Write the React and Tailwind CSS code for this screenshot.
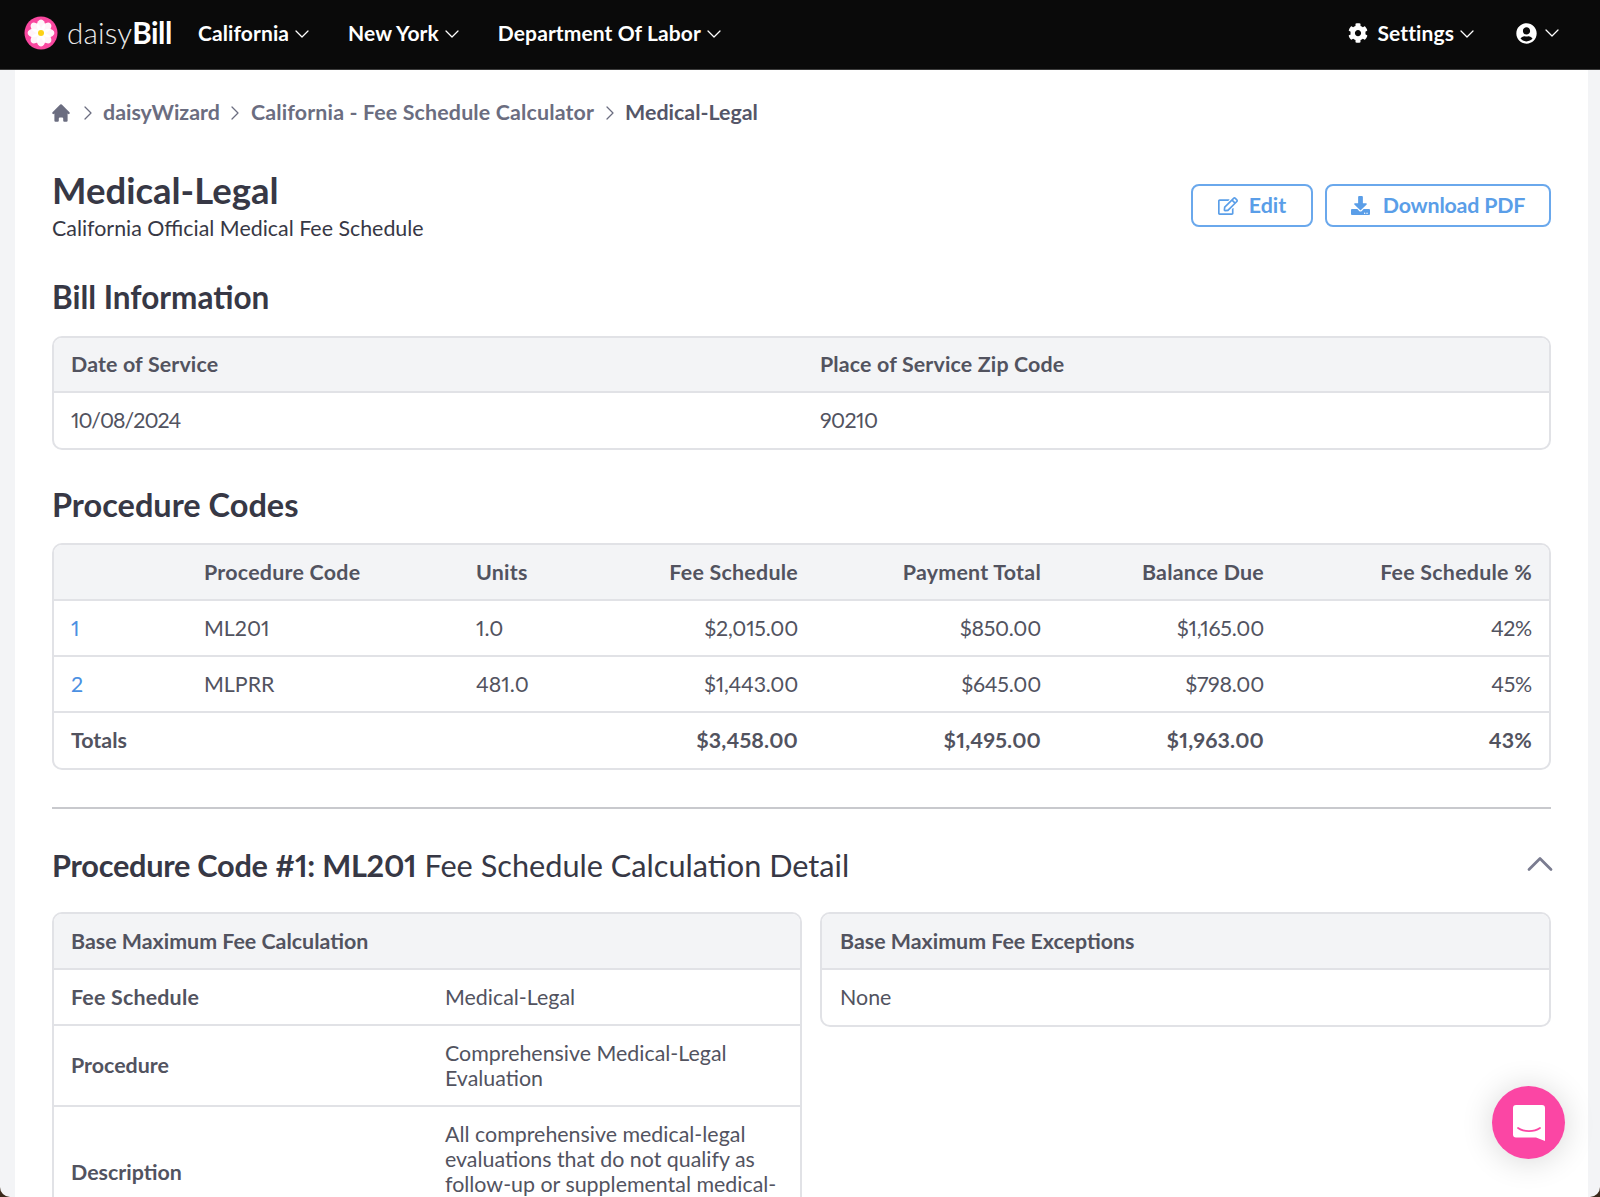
import React from "react";
import { ChevronDown, ChevronRight, ChevronUp } from "lucide-react";
import { FaCog, FaUserCircle, FaRegEdit, FaDownload } from "react-icons/fa";
import { HiHome } from "react-icons/hi";

const Logo = () => (
  <div className="flex items-center gap-[9px]">
    <svg width="34" height="34" viewBox="0 0 34 34">
      <circle cx="17" cy="17" r="16.5" fill="#f9479f" />
      {[0, 45, 90, 135, 180, 225, 270, 315].map((a) => (
        <ellipse key={a} cx="17" cy="9.6" rx="4.2" ry="6" fill="#fff" fillOpacity="0.94" transform={`rotate(${a} 17 17)`} />
      ))}
      <circle cx="17" cy="17" r="3" fill="#fcd116" />
    </svg>
    <span className="text-[29.6px] font-light tracking-[0.15px] text-[#e9e9e9]">
      daisy<span className="font-bold tracking-[-0.4px] text-white">Bill</span>
    </span>
  </div>
);

const NavItem = ({ children }) => (
  <div className="flex items-center gap-px text-[21px] font-bold tracking-[0.1px] text-white">
    {children}
    <ChevronDown size={24} strokeWidth={1.25} className="mt-[2px]" />
  </div>
);

const Crumb = () => <ChevronRight size={24} strokeWidth={1.25} />;

const Card = ({ children }) => (
  <div className="overflow-hidden rounded-[10px] border-2 border-[#e1e2e6]">{children}</div>
);

const rows = [
  ["1", "ML201", "1.0", "$2,015.00", "$850.00", "$1,165.00", "42%"],
  ["2", "MLPRR", "481.0", "$1,443.00", "$645.00", "$798.00", "45%"],
];

const codeCols = "grid grid-cols-[133px_272px_120px_202px_243px_223px_1fr] items-center px-[17px]";
const money = "text-right tracking-[-0.25px]";
const total = "text-right tracking-[0.15px]";

export default function App() {
  return (
    <div className="h-[1197px] w-[1600px] overflow-hidden bg-[#3b2a1c] font-['Lato',sans-serif] text-[21.4px] text-[#52535f] proportional-nums">
      <div className="flex h-full flex-col overflow-hidden rounded-b-[10px] bg-[#f3f4f6]">
        <nav className="flex h-[70px] shrink-0 items-center justify-between border-b border-[#3c3c3c] bg-[#0a0a0a] pb-[3px] pl-6 pr-[36px]">
          <div className="flex items-center">
            <Logo />
            <div className="ml-[26px] flex items-center gap-[34px]">
              <NavItem>California</NavItem>
              <NavItem>New York</NavItem>
              <NavItem>Department Of Labor</NavItem>
            </div>
          </div>
          <div className="flex items-center gap-[37px]">
            <NavItem>
              <FaCog size={20} className="mr-[8px]" />
              Settings
            </NavItem>
            <div className="flex items-center gap-[3px] text-white">
              <FaUserCircle size={21} />
              <ChevronDown size={24} strokeWidth={1.25} />
            </div>
          </div>
        </nav>

        <main className="ml-[15px] mr-[12px] min-h-0 flex-1 overflow-hidden bg-white px-[37px]">
          <div className="flex h-[84px] items-center gap-[3.5px] pt-[1px] font-bold text-[#6b6d80]">
            <HiHome size={22} className="-ml-[2px]" />
            <Crumb />
            <span>daisyWizard</span>
            <Crumb />
            <span className="tracking-[0.15px]">California - Fee Schedule Calculator</span>
            <Crumb />
            <span className="text-[#555668]">Medical-Legal</span>
          </div>

          <div className="flex items-start justify-between">
            <div>
              <h1 className="mt-[14px] text-[36.5px] font-bold leading-[44px] text-[#373845]">Medical-Legal</h1>
              <p className="mt-[4px] leading-[25px] text-[#373845]">California Official Medical Fee Schedule</p>
            </div>
            <div className="mt-[30px] flex gap-3 font-bold text-[#5a9ee8]">
              <button className="flex h-[43px] w-[122px] items-center justify-center gap-[11px] rounded-[8px] border-2 border-[#6aa8ec]">
                <FaRegEdit size={20} />
                Edit
              </button>
              <button className="flex h-[43px] w-[226px] items-center justify-center gap-[13px] rounded-[8px] border-2 border-[#6aa8ec]">
                <FaDownload size={19} />
                <span className="tracking-[-0.2px]">Download PDF</span>
              </button>
            </div>
          </div>

          <h2 className="mt-[34px] text-[31.5px] font-bold leading-[44px] text-[#373845]">Bill Information</h2>
          <div className="mt-[17px]">
            <Card>
              <div className="grid h-[55px] grid-cols-[749px_1fr] items-center border-b-2 border-[#e1e2e6] bg-[#f3f4f6] px-[17px] font-bold tracking-[0.15px]">
                <div>Date of Service</div>
                <div>Place of Service Zip Code</div>
              </div>
              <div className="grid h-[55px] grid-cols-[749px_1fr] items-center px-[17px]">
                <div className="tracking-[-1px]">10/08/2024</div>
                <div className="tracking-[-0.6px]">90210</div>
              </div>
            </Card>
          </div>

          <h2 className="mt-[33px] text-[32.5px] font-bold leading-[44px] text-[#373845]">Procedure Codes</h2>
          <div className="mt-[16px]">
            <Card>
              <div className={`${codeCols} h-14 border-b-2 border-[#e1e2e6] bg-[#f3f4f6] font-bold tracking-[0.25px]`}>
                <div />
                <div>Procedure Code</div>
                <div>Units</div>
                <div className="text-right">Fee Schedule</div>
                <div className="text-right">Payment Total</div>
                <div className="text-right">Balance Due</div>
                <div className="text-right">Fee Schedule %</div>
              </div>
              {rows.map((r) => (
                <div key={r[0]} className={`${codeCols} h-14 border-b-2 border-[#e1e2e6]`}>
                  <div className="text-[#4a90e2]">{r[0]}</div>
                  <div>{r[1]}</div>
                  <div>{r[2]}</div>
                  <div className={money}>{r[3]}</div>
                  <div className={money}>{r[4]}</div>
                  <div className={money}>{r[5]}</div>
                  <div className={money}>{r[6]}</div>
                </div>
              ))}
              <div className={`${codeCols} h-[55px] font-bold`}>
                <div>Totals</div>
                <div />
                <div />
                <div className={total}>$3,458.00</div>
                <div className={total}>$1,495.00</div>
                <div className={total}>$1,963.00</div>
                <div className={total}>43%</div>
              </div>
            </Card>
          </div>

          <hr className="mt-[37px] border-t-2 border-[#c8c9cd]" />

          <div className="mt-[35px] flex items-center justify-between text-[#373845]">
            <h2 className="text-[30.7px] leading-[44px]">
              <span className="font-bold tracking-[-0.25px]">Procedure Code #1: ML201</span> Fee Schedule Calculation Detail
            </h2>
            <ChevronUp size={44} strokeWidth={1.5} className="-mb-[6px] -mr-[11px] -mt-[10px] text-[#7a7c90]" />
          </div>

          <div className="mt-[24px] grid grid-cols-[750px_1fr] items-start gap-[18px]">
            <Card>
              <div className="flex h-14 items-center border-b-2 border-[#e1e2e6] bg-[#f3f4f6] px-[17px] font-bold">Base Maximum Fee Calculation</div>
              <div className="grid h-14 grid-cols-[374px_1fr] items-center border-b-2 border-[#e1e2e6] px-[17px]">
                <div className="font-bold tracking-[0.2px]">Fee Schedule</div>
                <div>Medical-Legal</div>
              </div>
              <div className="grid grid-cols-[374px_1fr] items-center border-b-2 border-[#e1e2e6] px-[17px] py-[14.5px] leading-[25px]">
                <div className="font-bold">Procedure</div>
                <div>Comprehensive Medical-Legal Evaluation</div>
              </div>
              <div className="grid grid-cols-[374px_1fr] items-center px-[17px] py-[15px] leading-[25px]">
                <div className="font-bold">Description</div>
                <div>All comprehensive medical-legal evaluations that do not qualify as follow-up or supplemental medical-legal evaluations</div>
              </div>
            </Card>
            <Card>
              <div className="flex h-14 items-center border-b-2 border-[#e1e2e6] bg-[#f3f4f6] px-[18px] font-bold">Base Maximum Fee Exceptions</div>
              <div className="flex h-[55px] items-center px-[18px]">None</div>
            </Card>
          </div>
        </main>
      </div>

      <div className="fixed bottom-[38px] right-[35px] flex h-[73px] w-[73px] items-center justify-center rounded-full bg-[#fb46a4] shadow-[0_2px_32px_rgba(0,0,0,0.16)]">
        <svg width="32" height="36" viewBox="0 0 32 36">
          <path d="M3 0h26a3 3 0 0 1 3 3v33l-9-3.5H3a3 3 0 0 1-3-3V3a3 3 0 0 1 3-3z" fill="#fff" />
          <path d="M5 23c6 4.2 16 4.2 22 0" fill="none" stroke="#fb46a4" strokeWidth="1.8" strokeLinecap="round" />
        </svg>
      </div>
    </div>
  );
}
